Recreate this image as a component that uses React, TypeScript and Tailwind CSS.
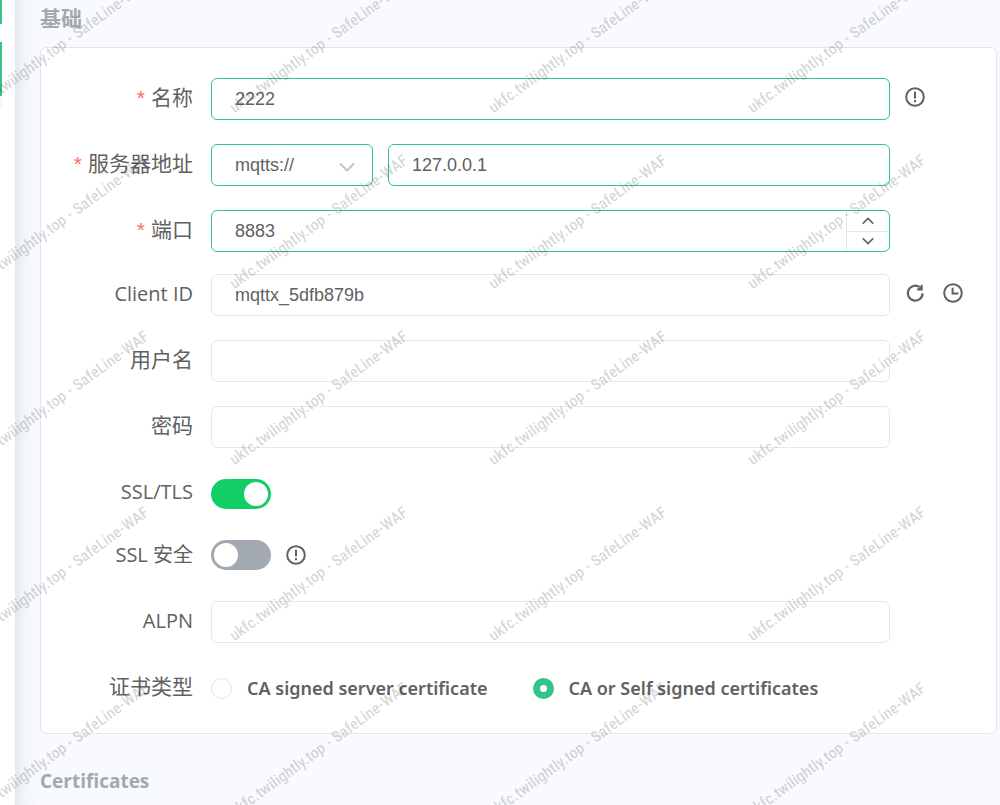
import { useState } from 'react';
import type { ReactNode } from 'react';

const inputBase =
  "h-[42px] w-full min-w-0 rounded-md border bg-white px-[23px] font-['Liberation_Sans',sans-serif] text-lg text-[#616161] outline-none";
const filled = 'border-[#34c388]';
const plain = 'border-[#e6e8f1]';

const InfoIcon = () => (
  <svg viewBox="0 0 20 20" className="size-5" fill="none" stroke="#616161" strokeWidth="2">
    <circle cx="10" cy="10" r="8.8" />
    <path d="M10 4.8v6.8M10 13v2.2" />
  </svg>
);

const RefreshIcon = () => (
  <svg viewBox="0 0 20 20" className="size-5" fill="none" stroke="#616161" strokeWidth="2.2">
    <path d="M17.6 10.4A7.4 7.4 0 1 1 14.6 4.2" />
    <path d="M17.7 1.8v5.6h-5.6v-1.6l2.6-1.2 1.4-2.8z" fill="#616161" stroke="none" />
  </svg>
);

const ClockIcon = () => (
  <svg viewBox="0 0 20 20" className="size-5" fill="none" stroke="#616161" strokeWidth="2">
    <circle cx="10" cy="10" r="8.8" />
    <path d="M9.6 4.8v5.6h5.8" />
  </svg>
);

const Chevron = ({ className }: { className: string }) => (
  <svg viewBox="0 0 16 10" className={className} fill="none" stroke="currentColor">
    <path d="M1 1.5l7 7 7-7" />
  </svg>
);

type RowProps = {
  label: string;
  htmlFor?: string;
  required?: boolean;
  className?: string;
  labelClass?: string;
  extra?: ReactNode;
  children: ReactNode;
};

const Row = ({
  label,
  htmlFor,
  required,
  className = 'mb-6 h-[42px]',
  labelClass = 'pb-1 text-[21px]',
  extra,
  children,
}: RowProps) => (
  <div className={`flex items-center ${className}`}>
    <label htmlFor={htmlFor} className={`w-[152px] shrink-0 text-right leading-7 whitespace-nowrap ${labelClass}`}>
      {required && <span className="mr-1.5 font-['Liberation_Sans',sans-serif] text-[#f56c6c]">*</span>}
      {label}
    </label>
    <div className="ml-[18px] flex min-w-0 flex-1 items-center">{children}</div>
    <div className="flex w-[106px] shrink-0 items-center gap-[18px] pb-1 pl-[15px]">{extra}</div>
  </div>
);

type SwitchProps = { id: string; checked: boolean; onChange: (v: boolean) => void };

const Switch = ({ id, checked, onChange }: SwitchProps) => (
  <button
    id={id}
    type="button"
    role="switch"
    aria-checked={checked}
    onClick={() => onChange(!checked)}
    className={`flex h-[30px] w-[60px] items-center rounded-full px-[3px] ${
      checked ? 'justify-end bg-[#13ce66]' : 'justify-start bg-[#a2a9b0]'
    }`}
  >
    <span className="size-6 rounded-full bg-white" />
  </button>
);

const certTypes = [
  { value: 'server', text: 'CA signed server certificate' },
  { value: 'self', text: 'CA or Self signed certificates' },
];

const Watermark = () => (
  <div aria-hidden="true" className="pointer-events-none absolute inset-0 overflow-hidden">
    <div className="-mt-[42px] -ml-[70px] grid w-max grid-cols-[repeat(4,259px)] auto-rows-[176px]">
      {Array.from({ length: 20 }, (_, k) => (
        <div key={k} className="flex items-center justify-center">
          <span className="-rotate-36 font-['Roboto_Condensed','Liberation_Sans_Narrow',Roboto,sans-serif] text-base font-medium whitespace-nowrap text-black/16">
            ukfc.twilightly.top - SafeLine-WAF
          </span>
        </div>
      ))}
    </div>
  </div>
);

export default function App() {
  const [name, setName] = useState('2222');
  const [protocol, setProtocol] = useState('mqtts://');
  const [host, setHost] = useState('127.0.0.1');
  const [port, setPort] = useState(8883);
  const [clientId, setClientId] = useState('mqttx_5dfb879b');
  const [ssl, setSsl] = useState(true);
  const [secure, setSecure] = useState(false);
  const [cert, setCert] = useState('self');

  return (
    <div className="relative flex min-h-screen overflow-hidden bg-[#f8fafe] font-['Open_Sans','Noto_Sans_CJK_SC',sans-serif] text-[#616161]">
      <aside className="w-[15px] shrink-0 bg-white">
        <div className="h-6 w-0.5 bg-[#34c388]" />
        <div className="mt-[18px] h-[54px] w-0.5 bg-[#34c388]" />
        <div className="h-3 w-0.5 rounded-br bg-[#f3f6fa]" />
      </aside>
      <div className="w-[25px] shrink-0 bg-linear-to-r from-[#e2e6ee] via-[#f2f5fa] via-35% to-[#f8fafe]" />

      <main className="min-w-0 flex-1 pt-1 pr-[3px]">
        <h2 className="text-[21px] leading-7 font-bold text-[#a2a9b0]">基础</h2>
        <form className="mt-[15px] rounded-md border border-[#e3e6ee] bg-white pt-[30px]">
          <Row label="名称" htmlFor="name" required extra={<InfoIcon />}>
            <input id="name" className={`${inputBase} ${filled}`} value={name} onChange={(e) => setName(e.target.value)} />
          </Row>

          <Row label="服务器地址" htmlFor="host" required>
            <div className="relative mr-[15px] w-[162px] shrink-0">
              <select
                aria-label="协议"
                className={`${inputBase} ${filled} appearance-none`}
                value={protocol}
                onChange={(e) => setProtocol(e.target.value)}
              >
                <option>mqtt://</option>
                <option>mqtts://</option>
                <option>ws://</option>
                <option>wss://</option>
              </select>
              <Chevron className="pointer-events-none absolute top-[18px] right-[18px] h-2.5 w-4 stroke-2 text-[#c0c4cc]" />
            </div>
            <input id="host" className={`${inputBase} ${filled}`} value={host} onChange={(e) => setHost(e.target.value)} />
          </Row>

          <Row label="端口" htmlFor="port" required className="mb-[22px] h-[42px]">
            <div className={`flex h-[42px] w-full overflow-hidden rounded-md border ${filled}`}>
              <input
                id="port"
                type="number"
                className="min-w-0 flex-1 appearance-none px-[23px] font-['Liberation_Sans',sans-serif] text-lg outline-none [appearance:textfield] [&::-webkit-inner-spin-button]:appearance-none"
                value={port}
                onChange={(e) => setPort(Number(e.target.value))}
              />
              <div className="mr-px flex w-[42px] flex-col divide-y divide-[#e3e6ee] border-l border-[#e3e6ee]">
                <button type="button" aria-label="+" onClick={() => setPort(port + 1)} className="flex flex-1 items-center justify-center">
                  <Chevron className="h-2 w-3 rotate-180 stroke-2" />
                </button>
                <button type="button" aria-label="-" onClick={() => setPort(port - 1)} className="flex flex-1 items-center justify-center">
                  <Chevron className="h-2 w-3 stroke-2" />
                </button>
              </div>
            </div>
          </Row>

          <Row
            label="Client ID"
            htmlFor="client-id"
            labelClass="pb-0.5 text-xl"
            extra={
              <>
                <button type="button" aria-label="Refresh">
                  <RefreshIcon />
                </button>
                <button type="button" aria-label="Timestamp">
                  <ClockIcon />
                </button>
              </>
            }
          >
            <input id="client-id" className={`${inputBase} ${plain}`} value={clientId} onChange={(e) => setClientId(e.target.value)} />
          </Row>

          <Row label="用户名" htmlFor="username">
            <input id="username" className={`${inputBase} ${plain}`} />
          </Row>

          <Row label="密码" htmlFor="password">
            <input id="password" type="password" className={`${inputBase} ${plain}`} />
          </Row>

          <Row label="SSL/TLS" htmlFor="ssl" labelClass="pb-1 text-xl" className="mb-[17px] h-11">
            <Switch id="ssl" checked={ssl} onChange={setSsl} />
          </Row>

          <Row label="SSL 安全" htmlFor="secure" labelClass="text-xl" className="mb-6 h-11">
            <Switch id="secure" checked={secure} onChange={setSecure} />
            <span className="ml-[15px]">
              <InfoIcon />
            </span>
          </Row>

          <Row label="ALPN" htmlFor="alpn" labelClass="pb-0.5 text-xl">
            <input id="alpn" className={`${inputBase} ${plain}`} />
          </Row>

          <Row label="证书类型">
            <div role="radiogroup" aria-label="证书类型" className="flex gap-[45px]">
              {certTypes.map((v) => (
                <label
                  key={v.value}
                  className="flex items-center gap-[15px] font-['Noto_Sans',sans-serif] text-lg font-semibold whitespace-nowrap"
                >
                  <input
                    type="radio"
                    name="cert"
                    checked={cert === v.value}
                    onChange={() => setCert(v.value)}
                    className="size-[21px] shrink-0 appearance-none rounded-full border border-[#e0e2ec] bg-white checked:border-[7px] checked:border-[#34c388]"
                  />
                  {v.text}
                </label>
              ))}
            </div>
          </Row>
        </form>
        <h2 className="mt-[33px] text-[19px] leading-7 font-bold text-[#a2a9b0]">Certificates</h2>
      </main>

      <Watermark />
    </div>
  );
}
